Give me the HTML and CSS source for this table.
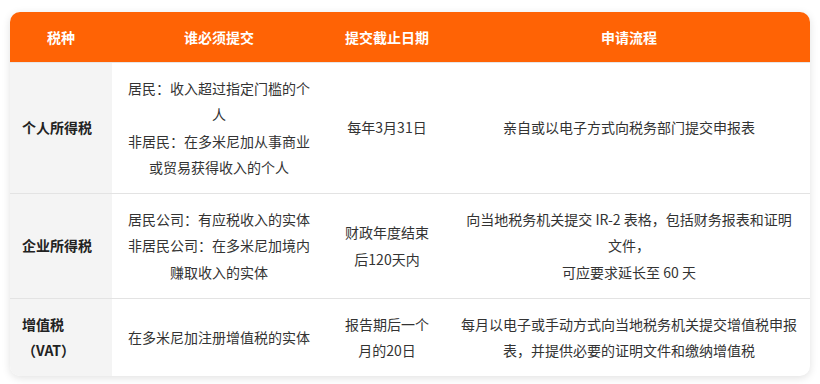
FILE: index.html
```html
<!DOCTYPE html>
<html lang="zh-CN">
<head>
<meta charset="utf-8">
<link rel="stylesheet" href="styles.css">
</head>
<body>
<div class="card">
  <table class="tax">
    <colgroup>
      <col class="c1"><col class="c2"><col class="c3"><col class="c4">
    </colgroup>
    <thead>
      <tr><th>税种</th><th>谁必须提交</th><th>提交截止日期</th><th>申请流程</th></tr>
    </thead>
    <tbody>
      <tr>
        <td class="name">个人所得税</td>
        <td>居民：收入超过指定门槛的个人<br>非居民：在多米尼加从事商业或贸易获得收入的个人</td>
        <td>每年3月31日</td>
        <td>亲自或以电子方式向税务部门提交申报表</td>
      </tr>
      <tr>
        <td class="name">企业所得税</td>
        <td>居民公司：有应税收入的实体<br>非居民公司：在多米尼加境内赚取收入的实体</td>
        <td>财政年度结束后120天内</td>
        <td>向当地税务机关提交 IR-2 表格，包括财务报表和证明文件，<br>可应要求延长至 60 天</td>
      </tr>
      <tr>
        <td class="name">增值税（VAT）</td>
        <td>在多米尼加注册增值税的实体</td>
        <td>报告期后一个月的20日</td>
        <td>每月以电子或手动方式向当地税务机关提交增值税申报表，并提供必要的证明文件和缴纳增值税</td>
      </tr>
    </tbody>
  </table>
</div>
</body>
</html>
```
FILE: styles.css
```css
html, body {
  margin: 0;
  padding: 0;
  background: #ffffff;
}
body {
  padding: 12px 10px;
  font-family: "Noto Sans CJK SC", "Noto Sans", sans-serif;
  color: #333333;
}
.card {
  width: 800px;
  border-radius: 10px;
  overflow: hidden;
  background: #ffffff;
  box-shadow: 0 2px 8px rgba(0, 0, 0, 0.12);
}
.tax {
  width: 800px;
  border-collapse: collapse;
  table-layout: fixed;
  font-size: 14px;
}
.c1 { width: 102px; }
.c2 { width: 214px; }
.c3 { width: 122px; }
.c4 { width: 362px; }
.tax thead th {
  background: #ff6305;
  color: #ffffff;
  font-weight: 700;
  height: 50px;
  padding: 0 12px;
  text-align: center;
  border-bottom: 1px solid #e6e6e6;
  box-sizing: border-box;
}
.tax td {
  padding: 12px 14px;
  text-align: center;
  vertical-align: middle;
  line-height: 26.6px;
  border-top: 1px solid #e3e3e3;
}
.tax tbody tr:first-child td {
  border-top: none;
}
.tax td:nth-child(2),
.tax td:nth-child(4) {
  padding-left: 12px;
  padding-right: 12px;
}
.tax td.name {
  background: #f4f4f4;
  text-align: left;
  font-weight: 700;
  padding-left: 12px;
  padding-right: 12px;
  color: #222222;
}
```
